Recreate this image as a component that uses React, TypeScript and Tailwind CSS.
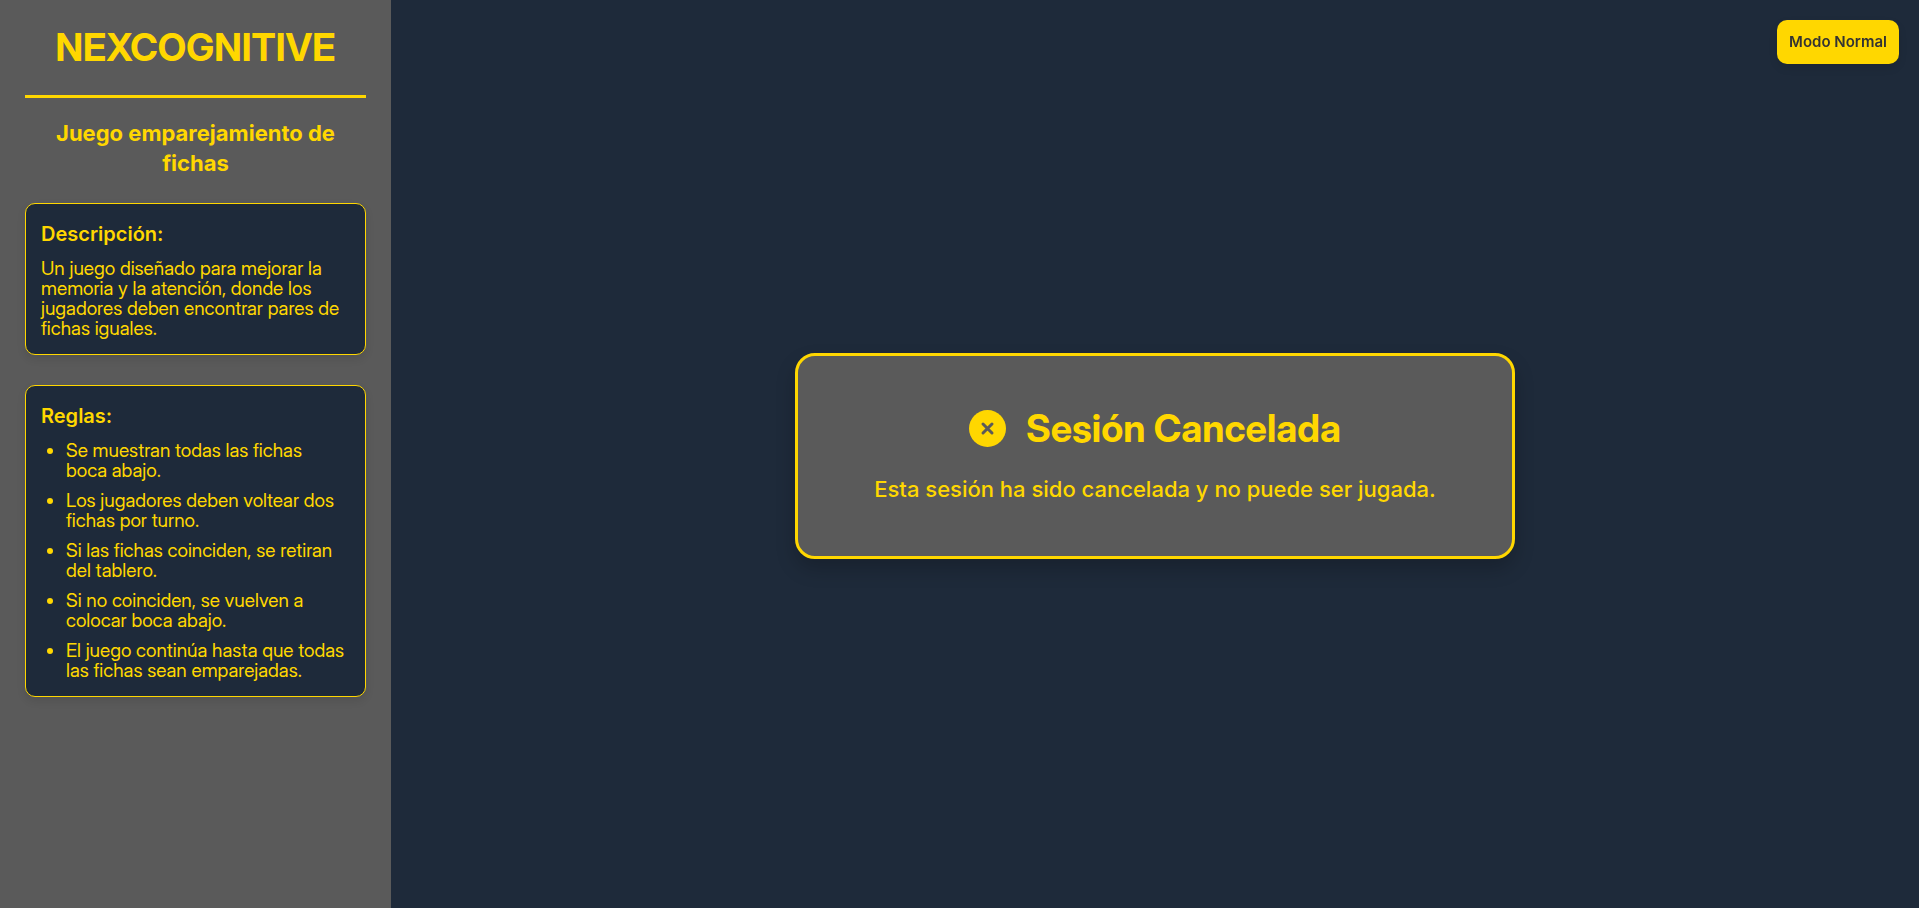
const rules = [
  "Se muestran todas las fichas boca abajo.",
  "Los jugadores deben voltear dos fichas por turno.",
  "Si las fichas coinciden, se retiran del tablero.",
  "Si no coinciden, se vuelven a colocar boca abajo.",
  "El juego continúa hasta que todas las fichas sean emparejadas.",
];

const cardClass =
  "rounded-[10px] border border-[#ffd700] bg-[#1e2a3a] p-[15px] shadow-[0_4px_8px_rgba(0,0,0,0.1)]";

function CancelIcon() {
  return (
    <svg viewBox="0 0 512 512" className="size-[37px]" aria-hidden="true">
      <circle cx="256" cy="256" r="256" fill="#ffd700" />
      <path
        d="M194 194l124 124M318 194L194 318"
        stroke="#5a5a5a"
        strokeWidth="42"
        strokeLinecap="round"
      />
    </svg>
  );
}

function Sidebar() {
  return (
    <aside className="w-[391px] shrink-0 bg-[#5a5a5a] p-[25px]">
      <h1 className="border-b-3 border-[#ffd700] pb-[25px] text-center font-['Inter_Display','Inter',sans-serif] text-[38px] leading-[45px] font-bold">
        NEXCOGNITIVE
      </h1>
      <h2 className="mt-5 text-center text-[22px] leading-[30px] font-bold">
        Juego emparejamiento de fichas
      </h2>
      <section className={`mt-[25px] ${cardClass}`}>
        <h3 className="mb-[10px] text-xl leading-[30px] font-semibold">Descripción:</h3>
        <p className="font-['Inter_Display','Inter',sans-serif] text-[19px] leading-5">
          Un juego diseñado para mejorar la memoria y la atención, donde los jugadores deben
          encontrar pares de fichas iguales.
        </p>
      </section>
      <section className={`mt-[30px] ${cardClass}`}>
        <h3 className="mb-[10px] text-xl leading-[30px] font-semibold">Reglas:</h3>
        <ul className="list-disc space-y-[10px] pr-1 pl-[25px] font-['Inter_Display','Inter',sans-serif] text-[19px] leading-5">
          {rules.map((rule) => (
            <li key={rule}>{rule}</li>
          ))}
        </ul>
      </section>
    </aside>
  );
}

export default function App() {
  return (
    <div className="flex min-h-screen bg-[#1e2a3a] font-['Inter',sans-serif] text-[#ffd700]">
      <Sidebar />
      <main className="flex flex-1 items-center justify-center pt-1">
        <section className="w-full max-w-[720px] rounded-[20px] border-3 border-[#ffd700] bg-[#5a5a5a] p-[50px] text-center shadow-[0_10px_20px_rgba(0,0,0,0.2)]">
          <h2 className="mb-[22px] flex items-center justify-center gap-5 font-['Inter_Display','Inter',sans-serif] text-[38px] leading-[44px] font-bold">
            <CancelIcon />
            Sesión Cancelada
          </h2>
          <p className="text-[22px] leading-[34px] font-medium">
            Esta sesión ha sido cancelada y no puede ser jugada.
          </p>
        </section>
      </main>
      <button
        type="button"
        className="fixed top-5 right-5 h-11 rounded-[10px] bg-[#ffd700] px-3 text-[15px] font-semibold text-[#333333] shadow-[0_4px_8px_rgba(0,0,0,0.1)]"
      >
        Modo Normal
      </button>
    </div>
  );
}
